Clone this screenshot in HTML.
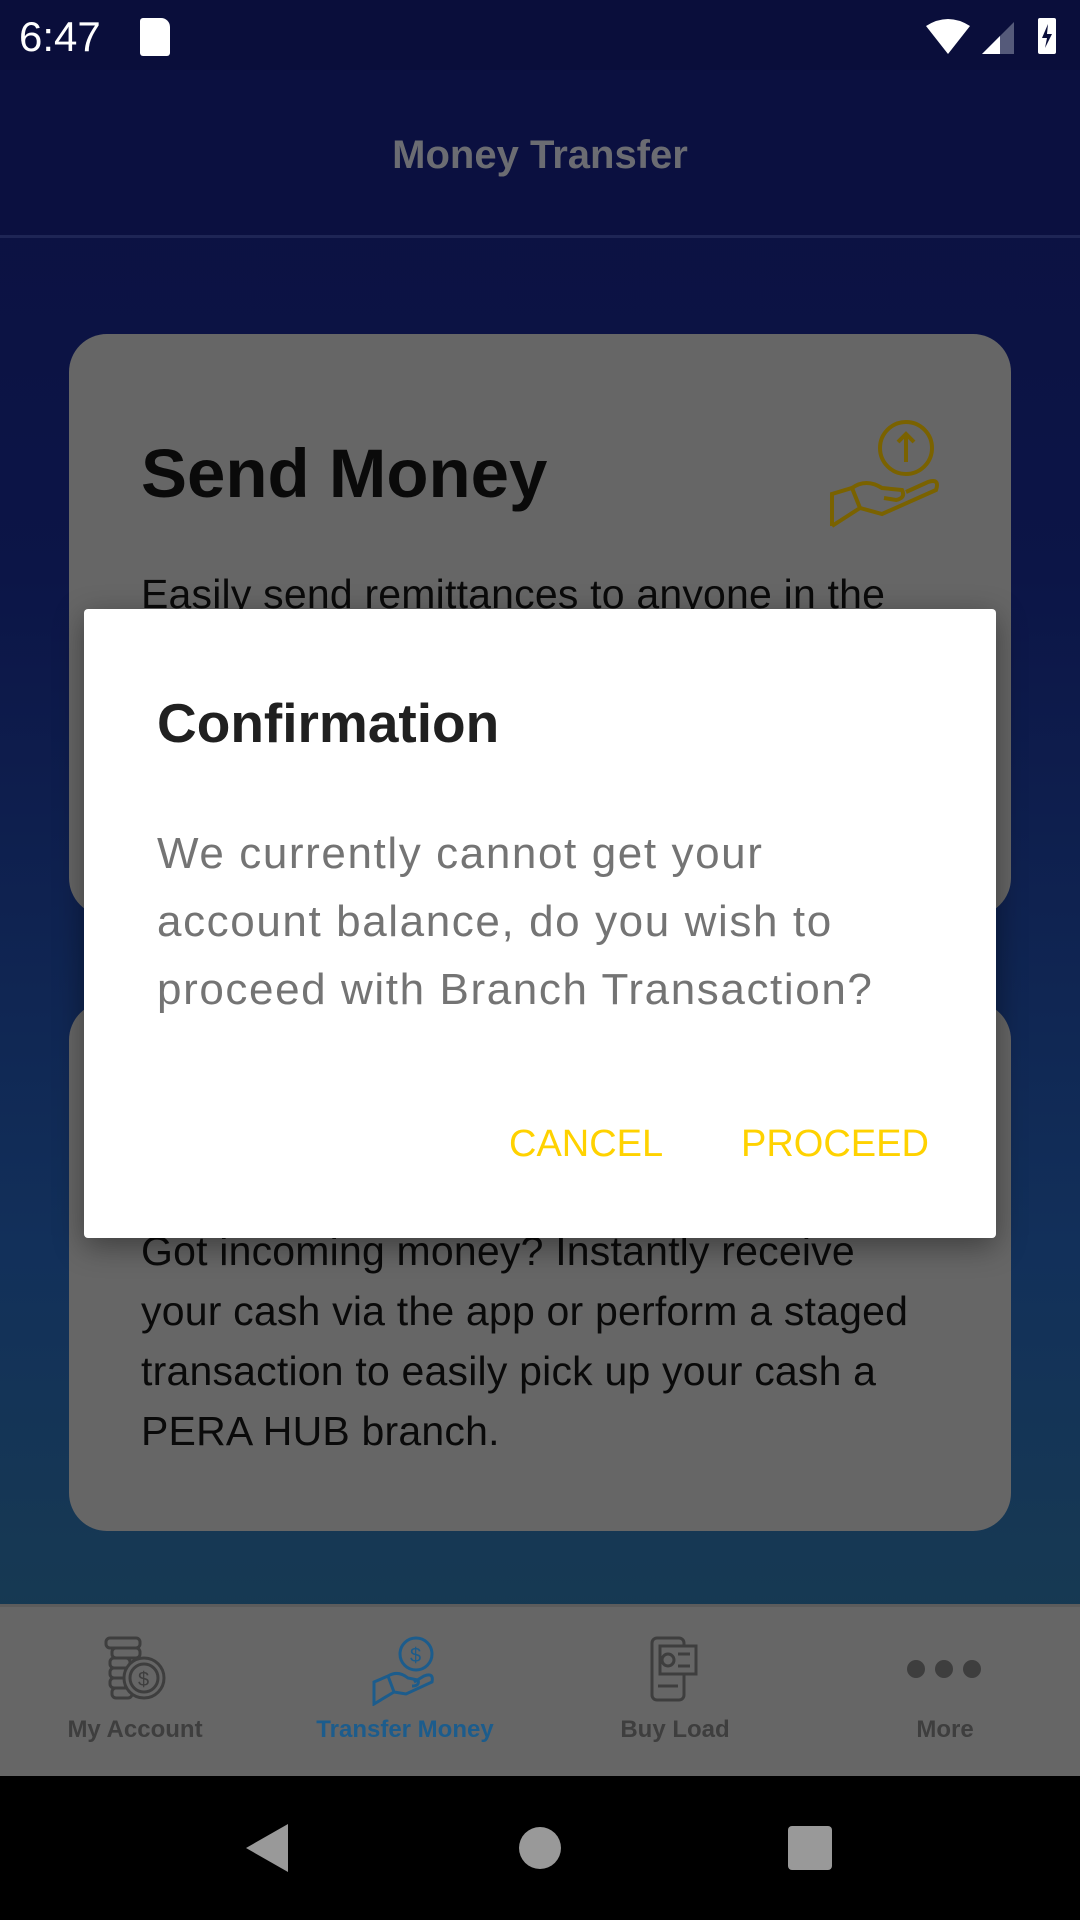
<!DOCTYPE html>
<html><head><meta charset="utf-8"><style>
*{margin:0;padding:0;box-sizing:border-box}
body{width:1080px;height:1920px;overflow:hidden;position:relative;font-family:"Liberation Sans",sans-serif;background:linear-gradient(180deg,#0b1040 0%,#0c1547 30%,#12305a 65%,#173a52 85%);}
.abs{position:absolute}
.status{left:0;top:0;width:1080px;height:70px;background:#0a0e3b}
.header{left:0;top:70px;width:1080px;height:168px;background:#0b1040;border-bottom:3px solid #1e2555}
.card{left:69px;width:942px;background:#666;border-radius:38px}
.ct{color:#0a0a0a;font-size:41px;line-height:60px;left:141px}
.dlg{left:84px;top:609px;width:912px;height:629px;background:#fff;border-radius:4px;box-shadow:0 8px 30px rgba(0,0,0,.4)}
.nav{left:0;top:1604px;width:1080px;height:172px;background:#666;border-top:3px solid #5c5c5c}
.lab{font-size:24px;font-weight:bold;color:#3e3e3e;text-align:center;width:270px;top:1716px}
.sys{left:0;top:1776px;width:1080px;height:144px;background:#000}
</style></head><body>
<div class="abs status"></div>
<div class="abs" style="left:19px;top:13px;color:#fff;font-size:42px">6:47</div>
<div class="abs" style="left:140px;top:18px;width:30px;height:38px;background:#fff;border-radius:3px 9px 3px 3px"></div>
<svg class="abs" style="left:920px;top:14px" width="140" height="42" viewBox="0 0 140 42">
<path d="M6 12 Q28 -2 50 12 L28 40 Z" fill="#fff"/>
<path d="M62 40 L94 8 L94 40 Z" fill="#555a7a"/><path d="M62 40 L80 22 L80 40 Z" fill="#fff"/>
<rect x="118" y="4" width="18" height="36" rx="2" fill="#fff"/><path d="M128 10 L122 24 L127 24 L125 34 L132 20 L127 20 Z" fill="#0a0e3b"/>
</svg>
<div class="abs header"></div>
<div class="abs" style="left:0;top:133px;width:1080px;text-align:center;color:#6b6c72;font-size:40px;font-weight:bold">Money Transfer</div>

<div class="abs card" style="top:334px;height:582px"></div>
<div class="abs" style="left:141px;top:434px;font-size:69px;font-weight:bold;color:#0a0a0a">Send Money</div>
<svg class="abs" style="left:826px;top:418px" width="116" height="112" viewBox="0 0 116 112" fill="none" stroke="#7a6200" stroke-width="4">
<circle cx="80" cy="30" r="26"/><path d="M80 44 V16 M72 24 L80 16 L88 24"/>
<path d="M6 108 V76 L26 70 L34 90 L6 108"/><path d="M26 70 Q40 60 56 70 L76 72 Q80 80 70 82 L58 80"/><path d="M34 90 L56 96 L110 72 Q114 60 102 64 L80 74"/>
</svg>
<div class="abs ct" style="top:564px;letter-spacing:0.2px">Easily send remittances to anyone in the</div>

<div class="abs card" style="top:1002px;height:529px"></div>
<div class="abs ct" style="top:1221px;letter-spacing:0.2px">Got incoming money? Instantly receive<br>your cash via the app or perform a staged<br>transaction to easily pick up your cash a<br>PERA HUB branch.</div>

<div class="abs nav"></div>
<svg class="abs" style="left:100px;top:1636px" width="72" height="66" viewBox="0 0 72 66" fill="none" stroke="#3e3e3e" stroke-width="3">
<rect x="6" y="2" width="34" height="10" rx="4"/><rect x="12" y="12" width="28" height="10" rx="4"/><rect x="10" y="22" width="20" height="10" rx="4"/><rect x="10" y="32" width="20" height="10" rx="4"/><rect x="10" y="42" width="20" height="10" rx="4"/><rect x="12" y="52" width="20" height="10" rx="4"/>
<circle cx="44" cy="42" r="20" fill="#666"/><circle cx="44" cy="42" r="14"/><text x="38" y="50" font-size="20" fill="#3e3e3e" stroke="none" font-family="Liberation Sans">$</text>
</svg>
<svg class="abs" style="left:372px;top:1634px" width="64" height="72" viewBox="0 0 64 72" fill="none" stroke="#1c5c8c" stroke-width="3">
<circle cx="44" cy="20" r="16"/><text x="38" y="28" font-size="20" fill="#1c5c8c" stroke="none" font-family="Liberation Sans">$</text>
<path d="M2 70 V48 L16 42 L22 58 Z M16 42 Q26 36 36 44 L46 46 Q48 52 40 52 M22 58 L34 60 L60 48 Q62 38 52 42 L42 48"/>
</svg>
<svg class="abs" style="left:650px;top:1636px" width="50" height="66" viewBox="0 0 50 66" fill="none" stroke="#3e3e3e" stroke-width="3">
<rect x="2" y="2" width="32" height="62" rx="5"/><rect x="10" y="10" width="36" height="28" fill="#666"/><circle cx="18" cy="24" r="6"/><path d="M28 18 H40 M28 30 H40"/><path d="M8 50 H28"/>
</svg>
<svg class="abs" style="left:906px;top:1659px" width="76" height="20"><circle cx="10" cy="10" r="9" fill="#3e3e3e"/><circle cx="38" cy="10" r="9" fill="#3e3e3e"/><circle cx="66" cy="10" r="9" fill="#3e3e3e"/></svg>
<div class="abs lab" style="left:0">My Account</div>
<div class="abs lab" style="left:270px;color:#1c5c8c">Transfer Money</div>
<div class="abs lab" style="left:540px">Buy Load</div>
<div class="abs lab" style="left:810px">More</div>

<div class="abs sys"></div>
<svg class="abs" style="left:240px;top:1822px" width="600" height="52"><path d="M48 2 V50 L6 26 Z" fill="#999"/><circle cx="300" cy="26" r="21" fill="#999"/><rect x="548" y="4" width="44" height="44" rx="4" fill="#999"/></svg>

<div class="abs dlg"></div>
<div class="abs" style="left:157px;top:691px;font-size:55px;font-weight:bold;color:#202020">Confirmation</div>
<div class="abs" style="left:157px;top:820px;font-size:44px;line-height:68px;letter-spacing:1.6px;color:#747474">We currently cannot get your<br>account balance, do you wish to<br>proceed with Branch Transaction?</div>
<div class="abs" style="left:509px;top:1123px;font-size:38px;color:#ffd200">CANCEL</div>
<div class="abs" style="left:741px;top:1123px;font-size:38px;color:#ffd200">PROCEED</div>
</body></html>
